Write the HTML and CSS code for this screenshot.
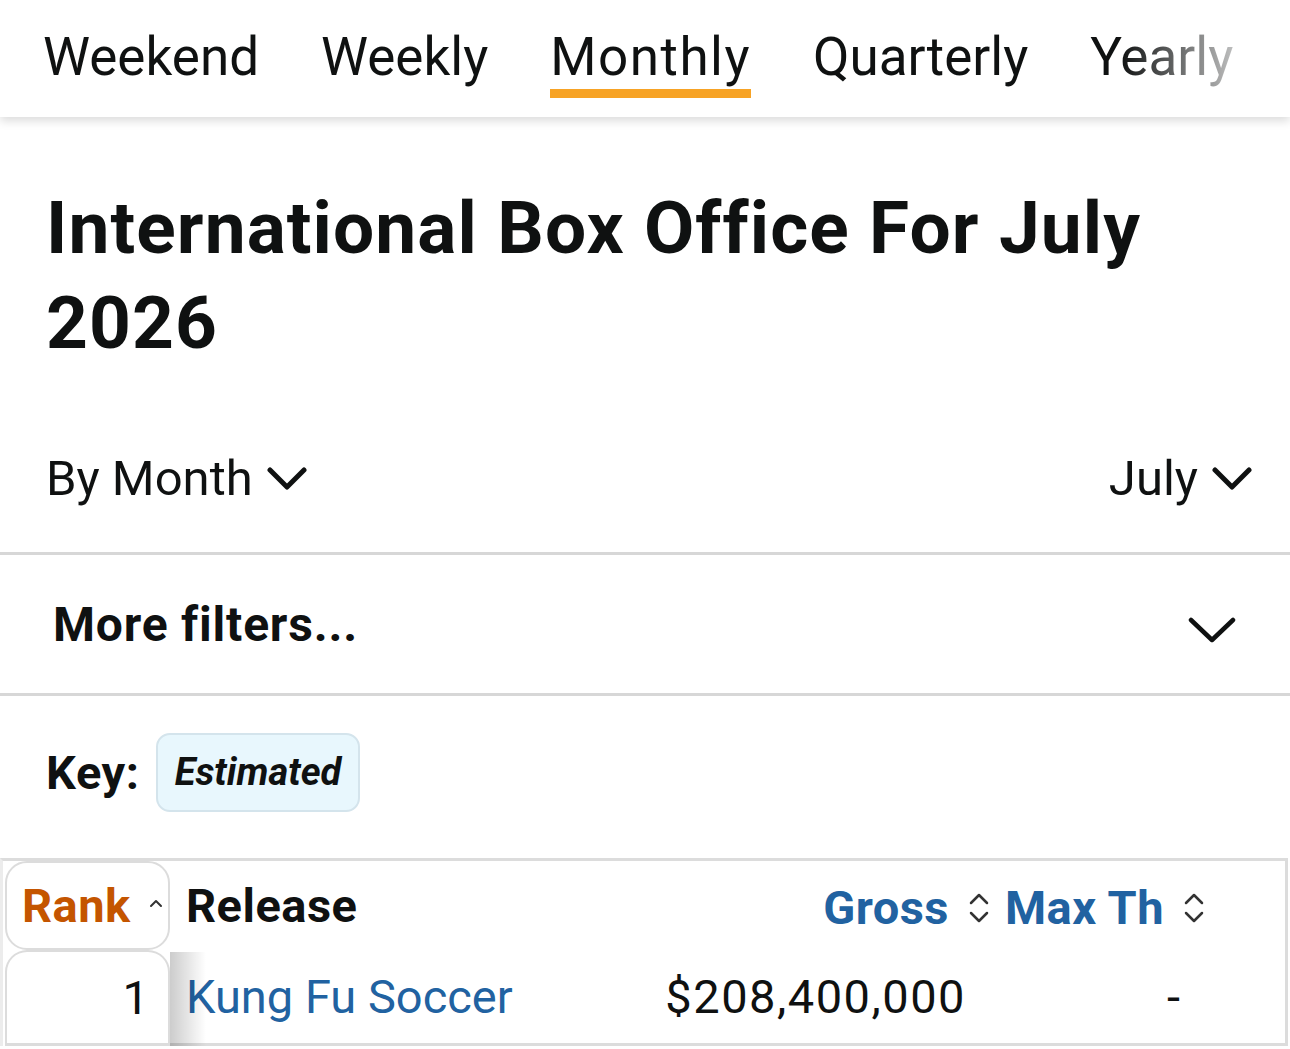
FILE: index.html
```html
<!DOCTYPE html>
<html lang="en">
<head>
<meta charset="utf-8">
<title>International Box Office For July 2026</title>
<link rel="stylesheet" href="styles.css">
</head>
<body>
<nav class="tabs">
  <a class="tab">Weekend</a>
  <a class="tab">Weekly</a>
  <a class="tab active">Monthly</a>
  <a class="tab">Quarterly</a>
  <a class="tab">Yearly</a>
  <div class="fade"></div>
</nav>

<h1 class="title">International Box Office For July 2026</h1>

<div class="filters">
  <div class="select">By Month
    <svg class="chev" viewBox="0 0 40 26"><polyline points="3,4 20,21 37,4"/></svg>
  </div>
  <div class="select">July
    <svg class="chev" viewBox="0 0 40 26"><polyline points="3,4 20,21 37,4"/></svg>
  </div>
</div>

<div class="more">
  <span>More filters...</span>
  <svg class="chev-lg" viewBox="0 0 48 28"><polyline points="3,4 24,24 45,4"/></svg>
</div>

<div class="key">
  <span class="key-label">Key:</span>
  <span class="badge">Estimated</span>
</div>

<div class="table-wrap">
  <table class="grid">
    <colgroup>
      <col class="c-rank"><col class="c-release"><col class="c-gross"><col class="c-max"><col>
    </colgroup>
    <thead>
      <tr>
        <th class="rank"><span class="rank-label">Rank</span><svg class="caret" viewBox="0 0 14 10"><polyline points="2,8 7,3 12,8"/></svg></th>
        <th class="release">Release</th>
        <th class="num"><span class="sortable">Gross</span><svg class="updown" viewBox="0 0 22 36"><polyline points="3,13 11,5 19,13"/><polyline points="3,23 11,31 19,23"/></svg></th>
        <th class="num max"><span class="sortable">Max Th</span><svg class="updown" viewBox="0 0 22 36"><polyline points="3,13 11,5 19,13"/><polyline points="3,23 11,31 19,23"/></svg></th>
        <th class="filler"></th>
      </tr>
    </thead>
    <tbody>
      <tr>
        <td class="rank">1</td>
        <td class="release"><a class="link">Kung Fu Soccer</a></td>
        <td class="val gross">$208,400,000</td>
        <td class="val maxv">-</td>
        <td class="filler"></td>
      </tr>
    </tbody>
  </table>
</div>
</body>
</html>
```

FILE: styles.css
```css
html, body {
  margin: 0;
  padding: 0;
  background: #fff;
}

body {
  font-family: Roboto, "Noto Sans", Arial, sans-serif;
  color: #0f1111;
  overflow: hidden;
}

/* ---------- tabs ---------- */
.tabs {
  position: relative;
  display: flex;
  gap: 62px;
  height: 117px;
  box-sizing: border-box;
  padding: 25px 0 0 43px;
  box-shadow: 0 4px 9px rgba(0, 0, 0, 0.14);
  overflow: hidden;
  background: #fff;
}

.tab {
  font-size: 53px;
  line-height: 64px;
  height: 64px;
  white-space: nowrap;
  color: #0f1111;
  border-bottom: 9px solid transparent;
}

.tab.active {
  border-bottom-color: #f7a325;
  letter-spacing: 1.5px;
}

.fade {
  position: absolute;
  top: 0;
  right: 0;
  bottom: 0;
  width: 170px;
  background: linear-gradient(to right, rgba(255, 255, 255, 0), rgba(255, 255, 255, 1) 92%);
}

/* ---------- title ---------- */
.title {
  margin: 64px 46px 0;
  font-size: 73px;
  line-height: 95px;
  font-weight: 700;
  letter-spacing: 1.1px;
  color: #0f1111;
}

/* ---------- filters ---------- */
.filters {
  display: flex;
  justify-content: space-between;
  padding: 80px 38px 45px 46px;
  border-bottom: 3px solid #d7d7d7;
}

.select {
  display: flex;
  align-items: center;
  gap: 14px;
  font-size: 49px;
  line-height: 56px;
}

.chev {
  width: 40px;
  height: 26px;
  fill: none;
  stroke: #0f1111;
  stroke-width: 5;
  stroke-linecap: round;
  stroke-linejoin: round;
}

.more {
  display: flex;
  justify-content: space-between;
  align-items: center;
  height: 138px;
  padding: 0 54px 0 53px;
  border-bottom: 3px solid #d7d7d7;
  font-size: 48px;
  font-weight: 700;
  letter-spacing: 0.8px;
}

.chev-lg {
  width: 48px;
  height: 28px;
  margin-top: 12px;
  fill: none;
  stroke: #0f1111;
  stroke-width: 4.5;
  stroke-linecap: round;
  stroke-linejoin: round;
}

/* ---------- key ---------- */
.key {
  display: flex;
  align-items: center;
  gap: 16px;
  padding: 37px 46px 46px;
}

.key-label {
  font-size: 47px;
  font-weight: 700;
  letter-spacing: 0.6px;
}

.badge {
  display: inline-block;
  height: 79px;
  box-sizing: border-box;
  line-height: 75px;
  padding: 0 17px;
  border: 2px solid #d4e4ec;
  border-radius: 14px;
  background: #e8f7fd;
  font-size: 38px;
  font-weight: 700;
  font-style: italic;
}

/* ---------- table ---------- */
.table-wrap {
  margin-right: 2px;
  border-top: 3px solid #dcdcdc;
  border-left: 3px solid #ececec;
  border-right: 3px solid #dcdcdc;
  padding-left: 2px;
  overflow: hidden;
}

.grid {
  width: 100%;
  table-layout: fixed;
  border-collapse: separate;
  border-spacing: 0;
}

.c-rank { width: 165px; }
.c-release { width: 480px; }
.c-gross { width: 345px; }
.c-max { width: 215px; }

.grid th {
  height: 89px;
  padding: 0;
  font-size: 47px;
  font-weight: 700;
  letter-spacing: 0.5px;
  text-align: left;
  vertical-align: middle;
  white-space: nowrap;
}

.grid th.rank {
  border: 2px solid #dcdcdc;
  border-radius: 22px;
  padding-left: 15px;
  box-sizing: border-box;
}

.rank-label {
  color: #c45500;
}

.caret {
  width: 14px;
  height: 10px;
  margin-left: 18px;
  vertical-align: 14px;
  fill: none;
  stroke: #333;
  stroke-width: 2;
  stroke-linecap: round;
  stroke-linejoin: round;
}

.grid th.release {
  padding-left: 16px;
}

.grid th.num {
  text-align: right;
  padding-right: 5px;
  overflow: hidden;
}

.sortable {
  color: #2162a1;
  vertical-align: middle;
}

.updown {
  width: 22px;
  height: 36px;
  margin-left: 19px;
  vertical-align: middle;
  fill: none;
  stroke: #333;
  stroke-width: 2.5;
  stroke-linecap: round;
  stroke-linejoin: round;
}

.grid td {
  height: 91px;
  padding: 0;
  font-size: 47px;
  vertical-align: middle;
  white-space: nowrap;
  border-bottom: 3px solid #dcdcdc;
}

.grid td.rank {
  position: relative;
  text-align: right;
  padding-right: 19px;
  border: 2px solid #dcdcdc;
  border-bottom: 3px solid #dcdcdc;
  border-radius: 22px 22px 0 0;
}

.grid td.rank::after {
  content: "";
  position: absolute;
  top: 0;
  bottom: -3px;
  left: 100%;
  width: 36px;
  margin-left: 2px;
  background: linear-gradient(to right, rgba(0, 0, 0, 0.2), rgba(0, 0, 0, 0));
}

.grid td.release {
  padding-left: 16px;
}

.link {
  color: #2162a1;
  text-decoration: none;
}

.grid td.val {
  text-align: right;
}

.grid td.gross {
  padding-right: 29px;
  letter-spacing: 1.5px;
}

.grid td.maxv {
  padding-right: 30px;
}
```
